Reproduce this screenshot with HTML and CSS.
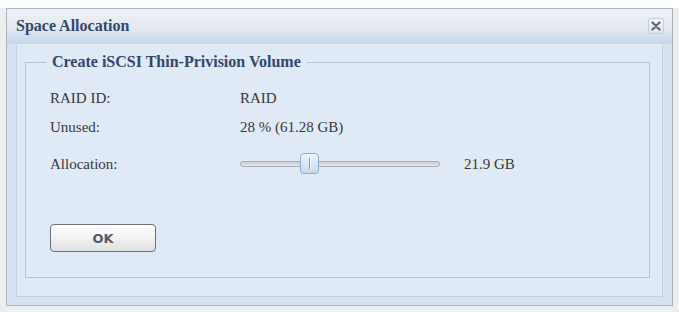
FILE: index.html
```html
<!DOCTYPE html>
<html>
<head>
<meta charset="utf-8">
<link rel="stylesheet" href="styles.css">
</head>
<body>
<div class="window">
  <div class="titlebar">
    <span class="title">Space Allocation</span>
    <span class="close" aria-label="close">
      <svg width="10" height="10" viewBox="0 0 10 10"><path d="M1.5 1.5 L8.5 8.5 M8.5 1.5 L1.5 8.5" stroke="#5f6874" stroke-width="2.2" stroke-linecap="round"/></svg>
    </span>
  </div>
  <div class="body">
    <div class="panel">
      <fieldset class="group">
        <legend class="legend">Create iSCSI Thin-Privision Volume</legend>
        <div class="form">
          <div class="row"><span class="label">RAID ID:</span><span class="value">RAID</span></div>
          <div class="row"><span class="label">Unused:</span><span class="value">28 % (61.28 GB)</span></div>
          <div class="row row-slider">
            <span class="label">Allocation:</span>
            <span class="value slider-wrap">
              <span class="track"><span class="thumb"><span class="grip"></span></span></span>
              <span class="amount">21.9 GB</span>
            </span>
          </div>
        </div>
        <button class="ok">OK</button>
      </fieldset>
    </div>
  </div>
</div>
</body>
</html>
```
FILE: styles.css
```css
html, body {
  margin: 0;
  padding: 0;
}
body {
  width: 679px;
  height: 312px;
  background: linear-gradient(#ffffff 0, #ffffff 8px, #eceef0 8px);
  padding: 8px 6px 6px 6px;
  box-sizing: border-box;
  font-family: "Liberation Serif", "Times New Roman", serif;
  overflow: hidden;
}
.window {
  height: 298px;
  box-sizing: border-box;
  border: 1px solid #aeb6c0;
  background: #d5e2f2;
  display: flex;
  flex-direction: column;
}
.titlebar {
  height: 35px;
  flex: none;
  box-sizing: border-box;
  background: linear-gradient(#eef1f5 0%, #e3e9f0 55%, #cddcee 85%, #c4d6ec 100%);
  display: flex;
  align-items: center;
  justify-content: space-between;
  padding: 0 8px 2px 9px;
}
.title {
  font-weight: bold;
  font-size: 16px;
  color: #33466b;
}
.close {
  width: 16px;
  height: 16px;
  box-sizing: border-box;
  border: 1px solid #c5ceda;
  border-radius: 2px;
  background: linear-gradient(#f4f6f9, #dfe5ec);
  display: flex;
  align-items: center;
  justify-content: center;
  margin-top: 1px;
}
.body {
  flex: 1;
  padding: 0 9px 8px 9px;
  display: flex;
}
.panel {
  flex: 1;
  border: 1px solid #c3d0e2;
  border-top-color: #eaf0f8;
  background: #e0e9f6;
  padding: 8px 12px 18px 8px;
  display: flex;
}
.group {
  flex: 1;
  margin: 0;
  border: 1px solid #b7c3d3;
  padding: 13px 20px 0 24px;
  min-width: 0;
}
.legend {
  font-weight: bold;
  font-size: 16px;
  line-height: 18px;
  color: #33466b;
  padding: 0 6px;
  margin-left: -4px;
}
.form {
  display: flex;
  flex-direction: column;
  font-size: 15px;
  color: #383838;
}
.row {
  display: flex;
  align-items: center;
  height: 29px;
}
.row-slider {
  height: 44px;
}
.label {
  width: 190px;
  flex: none;
}
.slider-wrap {
  display: flex;
  align-items: center;
}
.track {
  position: relative;
  width: 200px;
  height: 6px;
  box-sizing: border-box;
  border: 1px solid #a9adb2;
  border-radius: 3px;
  background: linear-gradient(#c9ccd0, #e6e8ea);
  display: block;
}
.thumb {
  position: absolute;
  left: 59px;
  top: -9px;
  width: 19px;
  height: 21px;
  box-sizing: border-box;
  border: 1px solid #8fabd2;
  border-radius: 4px;
  background: linear-gradient(#eef4fc, #c6d9f2);
  display: flex;
  align-items: center;
  justify-content: center;
}
.grip {
  width: 2px;
  height: 11px;
  border-left: 1px solid #7f96b8;
  border-right: 1px solid #ffffff;
  box-sizing: border-box;
  display: block;
}
.amount {
  margin-left: 24px;
  font-size: 15px;
}
.ok {
  display: block;
  margin-top: 38px;
  width: 106px;
  height: 28px;
  border: 1px solid #6b7178;
  border-radius: 4px;
  background: linear-gradient(#ffffff 0%, #f2f2f2 50%, #dedfe1 100%);
  box-shadow: inset 0 1px 0 #ffffff;
  font-family: "DejaVu Sans", Verdana, sans-serif;
  font-weight: bold;
  font-size: 13px;
  color: #555a60;
  padding: 0;
}
```
